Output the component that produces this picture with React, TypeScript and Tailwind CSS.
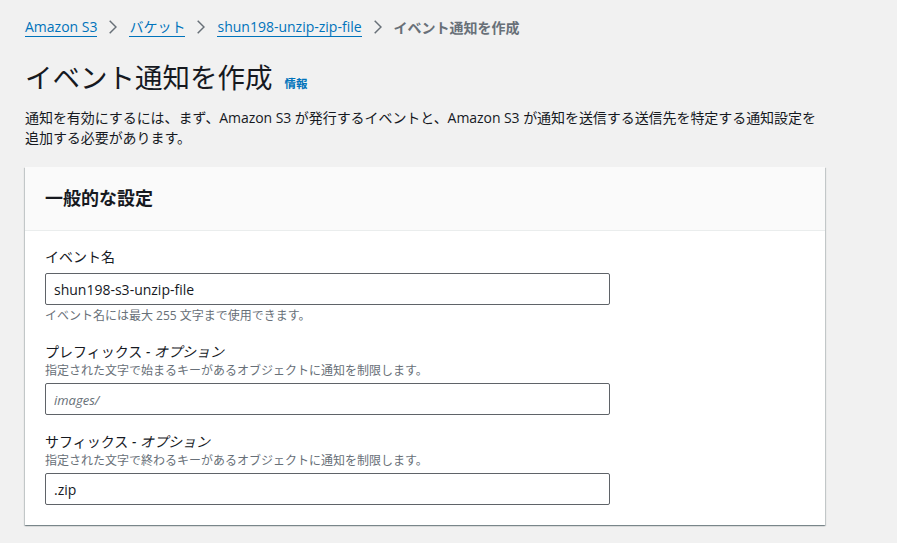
const FONT = "font-['Open_Sans','Noto_Sans_CJK_JP',sans-serif]";

function Chevron() {
  return (
    <svg width="8" height="14" viewBox="0 0 8 14" fill="none" className="mx-[12px] shrink-0">
      <path d="M0.7 0.7 L7 7 L0.7 13.3" stroke="#687078" strokeWidth="1.5" />
    </svg>
  );
}

function Crumb({ children }: { children: React.ReactNode }) {
  return (
    <a className="text-[#0073bb] text-[14px] leading-[17px] border-b border-[#0073bb] pb-[1px]">{children}</a>
  );
}

function Field({
  label,
  optional,
  hint,
  value,
  placeholder,
}: {
  label: string;
  optional?: boolean;
  hint: string;
  value?: string;
  placeholder?: string;
}) {
  return (
    <div>
      <div className="text-[14px] leading-[18px] text-[#16191f]">
        {label}
        {optional && <span className="italic"> - オプション</span>}
      </div>
      {optional && <div className="text-[12px] leading-[16px] mt-[2px] text-[#687078]">{hint}</div>}
      <input
        readOnly
        value={value ?? ""}
        placeholder={placeholder}
        className={`block w-[565px] h-[32px] px-[8px] border border-[#5f6368] rounded-[2px] bg-white text-[14px] text-[#16191f] outline-none placeholder:italic placeholder:text-[13px] placeholder:text-[#687078] ${optional ? "mt-[4px]" : "mt-[7px]"} ${FONT}`}
      />
      {!optional && <div className="text-[12px] leading-[16px] mt-[3px] pb-[1px] text-[#687078]">{hint}</div>}
    </div>
  );
}

export default function App() {
  return (
    <div className={`w-[897px] h-[543px] overflow-hidden bg-[#f1f1f1] pl-[25px] pt-[17px] ${FONT}`}>
      <nav className="flex items-center h-[20px]">
        <Crumb>Amazon S3</Crumb>
        <Chevron />
        <Crumb>バケット</Crumb>
        <Chevron />
        <Crumb>shun198-unzip-zip-file</Crumb>
        <Chevron />
        <span className="text-[14px] font-bold text-[#687078]">イベント通知を作成</span>
      </nav>

      <div className="flex items-baseline mt-[23px]">
        <h1 className="text-[27.5px] leading-[36px] font-normal text-[#16191f]">イベント通知を作成</h1>
        <span className="ml-[12px] text-[11.5px] font-bold text-[#0073bb]">情報</span>
      </div>

      <p className="w-[800px] mt-[12px] text-[14px] leading-[20px] tracking-[-0.06px] text-[#16191f]">
        通知を有効にするには、まず、Amazon S3 が発行するイベントと、Amazon S3 が通知を送信する送信先を特定する通知設定を追加する必要があります。
      </p>

      <section className="w-[800px] mt-[19px] bg-white shadow-[0_1px_1px_0_rgba(0,28,36,0.3),1px_1px_1px_0_rgba(0,28,36,0.15),-1px_1px_1px_0_rgba(0,28,36,0.15)]">
        <header className="h-[64px] flex items-center px-[20px] bg-[#fafafa] border-b border-[#eaeded]">
          <h2 className="text-[18px] font-bold text-[#16191f]">一般的な設定</h2>
        </header>
        <div className="px-[20px] pt-[17px] pb-[20px] flex flex-col gap-[18px]">
          <Field label="イベント名" value="shun198-s3-unzip-file" hint="イベント名には最大 255 文字まで使用できます。" />
          <Field label="プレフィックス" optional placeholder="images/" hint="指定された文字で始まるキーがあるオブジェクトに通知を制限します。" />
          <Field label="サフィックス" optional value=".zip" hint="指定された文字で終わるキーがあるオブジェクトに通知を制限します。" />
        </div>
      </section>
    </div>
  );
}
